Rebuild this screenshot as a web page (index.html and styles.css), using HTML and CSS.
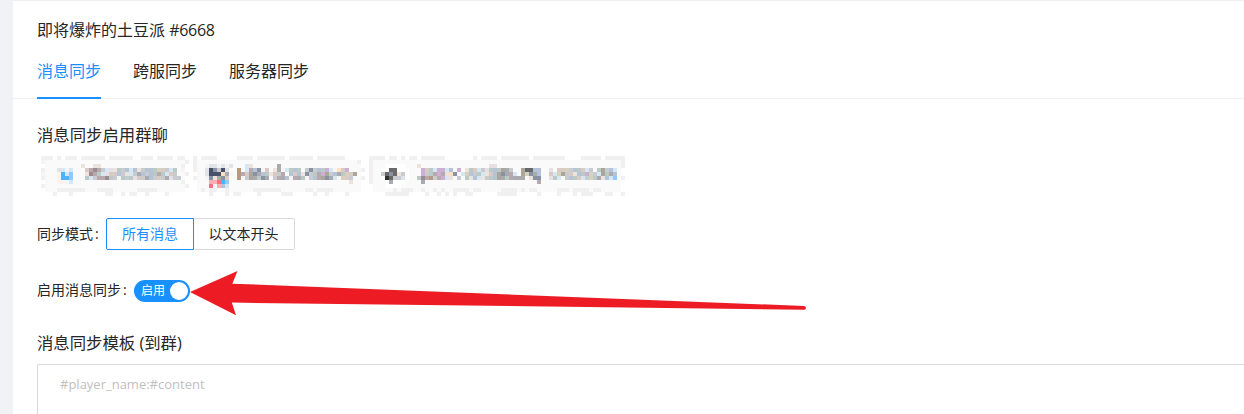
FILE: index.html
```html
<!DOCTYPE html>
<html lang="zh-CN">
<head>
<meta charset="utf-8">
<title>消息同步</title>
<link rel="stylesheet" href="styles.css">
</head>
<body>
<main class="panel">
  <header class="header">
    <div class="title">即将爆炸的土豆派 <span class="number">#6668</span></div>
    <nav class="tabs">
      <a class="tab active">消息同步</a>
      <a class="tab">跨服同步</a>
      <a class="tab">服务器同步</a>
    </nav>
  </header>
  <section class="content">
    <h3 class="heading">消息同步启用群聊</h3>
    <div class="groups">
      <svg class="group" data-tag="0" width="148" height="40" shape-rendering="crispEdges"></svg>
      <svg class="group" data-tag="1" width="172" height="40" shape-rendering="crispEdges"></svg>
      <svg class="group" data-tag="2" width="256" height="40" shape-rendering="crispEdges"></svg>
    </div>
    <div class="row mode">
      <span class="label">同步模式</span><span class="colon">:</span>
      <div class="radios">
        <span class="radio first">所有消息</span><span class="radio second">以文本开头</span>
      </div>
    </div>
    <div class="row enable">
      <span class="label">启用消息同步</span><span class="colon">:</span>
      <span class="switch"><span class="switch-text">启用</span><span class="knob"></span></span>
    </div>
    <h3 class="heading template">消息同步模板 (到群)</h3>
    <div class="textarea">#player_name:#content</div>
  </section>
</main>
<svg class="arrow" width="620" height="50" viewBox="188 268 620 50"><path fill="#ed1c24" d="M190 292L237.500 271L232.300 283.700L804 306Q806 306.500 806 308Q806 309.700 804 309.800L231.800 302.600L236 315.300Z"/></svg>
<script src="groups.js"></script>
</body>
</html>
```
FILE: styles.css
```css
* { box-sizing: border-box; }
body {
  margin: 0;
  height: 414px;
  overflow: hidden;
  padding-left: 13px;
  background: #f0f2f5;
  color: #262626;
  font-family: "Open Sans", "Noto Sans CJK SC", sans-serif;
  font-size: 14px;
}
.panel { height: 414px; background: #fff; border-top: 1px solid #f0f0f0; }
.header { height: 98px; padding: 15px 24px 0; border-bottom: 1px solid #f0f0f0; }
.title { height: 29px; line-height: 28px; font-size: 16px; white-space: nowrap; }
.number { letter-spacing: -0.3px; }
.tabs { display: flex; gap: 32px; height: 54px; }
.tab { height: 54px; line-height: 53px; font-size: 16px; white-space: nowrap; }
.tab.active { color: #1890ff; border-bottom: 2px solid #1890ff; }
.content { padding: 23px 0 0 24px; }
.heading { margin: 0; height: 26px; line-height: 26px; font-size: 16.38px; font-weight: 400; white-space: nowrap; }
.groups { display: flex; gap: 4px; height: 40px; margin: 8px 0 22px 4px; }
.group { display: block; flex: none; }
.row { display: flex; align-items: center; height: 32px; white-space: nowrap; }
.label, .colon { padding-bottom: 2px; }
.colon { width: 13px; padding-left: 2px; }
.radios { display: flex; height: 32px; }
.radio { line-height: 30px; text-align: center; border: 1px solid #d9d9d9; }
.radio.first { width: 88px; color: #1890ff; border-color: #1890ff; border-radius: 2px 0 0 2px; }
.radio.second { width: 101px; padding-right: 1px; border-left: 0; border-radius: 0 2px 2px 0; }
.enable { margin-top: 24px; }
.switch {
  display: flex;
  align-items: center;
  justify-content: space-between;
  width: 56px;
  height: 22px;
  margin-top: 2px;
  padding: 0 2px 0 7px;
  border-radius: 11px;
  background: #1890ff;
  color: #fff;
  font-size: 12px;
  line-height: 22px;
}
.knob { width: 18px; height: 18px; border-radius: 9px; background: #fff; }
.template { margin-top: 24px; }
.textarea {
  height: 60px;
  margin-top: 8px;
  padding: 8px 22px;
  border: 1px solid #d9d9d9;
  border-right: 0;
  border-radius: 2px 0 0 0;
  color: #bfbfbf;
  font-size: 13px;
  line-height: 22px;
}
.arrow { position: absolute; left: 188px; top: 268px; }
```
FILE: groups.js
```javascript
// Pixelated group tags: every character is one 4px cell.
const palette = {
  '0': '#f0f0f0', '1': '#fafafa', '2': '#f5f5f5', a: '#a9abb0', b: '#c8cbcf', c: '#b8a9ae',
  d: '#d9cbc4', e: '#b5c3d6', f: '#d5e7f4', g: '#bccac5', h: '#ece4dc', i: '#9c8c90',
  j: '#cbb0d3', k: '#8792a5', l: '#4eb3fc', m: '#91cafa', n: '#48506a', o: '#ff6d8a',
  p: '#fbaeb3', q: '#303030', r: '#686868', s: '#b79a80', t: '#ffe1c0', w: '#ffffff',
  u: '#e0e4e7', v: '#aaa79a', x: '#3dbbf2', y: '#d5d3be', z: '#e6dfe5'
};
const tags = [
  { cols: 37, runs: [
    [0, 0, '000.0.000.000000.000000..000.0000.00'], [0, 1, '2'], [36, 1, '0'], [35, 2, '0'],
    [0, 3, '0'], [0, 4, '2'], [35, 3, '2'], [36, 4, '0'], [0, 5, '0'], [35, 6, '0'], [36, 7, '0'], [0, 7, '0'],
    [10, 2, 'h'], [13, 2, 'hh'], [4, 3, 'ff2f'], [4, 4, '2lfm'], [4, 5, '2llm'], [4, 6, '222f'],
    [11, 3, 'dcicbfzhgbefehbeegydbfg'], [11, 4, 'hicgfzddebhfbaebegcgfdb'], [11, 5, 'gfbccigb2gbgzdbaebdbazbb'],
    [4, 8, '0000000'], [14, 8, '0000'], [24, 8, '00000'],
    [3, 9, '0...0........00..0.00..0....0']
  ]},
  { cols: 43, runs: [
    [0, 0, '0.0000.....0000.0000000.000000.0000000'], [0, 1, '0'], [0, 2, '0'], [0, 3, '0'], [0, 5, '0'], [42, 3, '0'], [42, 5, '0'], [41, 1, '0'],
    [3, 2, '2uu2u2u'], [13, 2, 'fh'], [21, 2, 'a'], [3, 3, 'unkbnu'], [3, 4, 'unnnta2'], [3, 5, '2khakd'], [4, 6, 'ppoxm'], [4, 7, 'o2pef'],
    [11, 3, 's1fcek2d1ha2fgeg1bkbegjf2tdj'], [11, 4, 'scdvkaeghdbc1edehkbgcjvbeagydv'], [11, 5, 's2bvagka1bcae2cag2becvkaf2ydb'],
    [39, 6, 'h'], [2, 8, '0.00..0'], [15, 8, '0000000'], [28, 8, '00.0000'],
    [4, 9, '0...0.00....0.....000.....0..0....0']
  ]},
  { cols: 64, runs: [
    [0, 0, '0000.00.0.00.000000.......0.0000.0000000.00000000....00000.00000'], [0, 1, '0'], [0, 2, '0'], [0, 3, '0'], [0, 4, '0'], [0, 5, '0'], [0, 6, '0'], [63, 1, '0'], [63, 2, '0'], [63, 5, '0'],
    [4, 2, 'wwwww'], [3, 3, 'wwrrwww'], [3, 4, 'brkrhbw'], [3, 5, 'wqrbbuw'], [4, 6, 'wawww'], [4, 7, 'wwww'],
    [12, 2, 'h'], [30, 2, 'zz'],
    [13, 3, 'jdgfjjfe1j1hgdfbzgegvab11vrree'], [13, 4, 'jbgcjchtk1fyebgfhdevkacf1vykae'],
    [12, 5, 'gicsbcjfh1b1ghefhbgevagcaaa1hkk'], [13, 6, 'a'], [42, 6, 'c'],
    [45, 3, 'z1ddybegdfb1gvbef'], [45, 4, 'dfyvbdhegjybfvgae'], [45, 5, 'zgf1begdfbygahefm'],
    [6, 8, '0.000..0..0.0..0000.00'], [33, 8, '0000.0.00'], [47, 8, '000.0000.00'],
    [4, 9, '000000....0..0.0.0..00......00000.....0....0...0.000...00..0']
  ]}
];
document.querySelectorAll('.group').forEach(svg => {
  const tag = tags[svg.dataset.tag];
  const add = (x, y, w, h, color) => {
    const r = document.createElementNS('http://www.w3.org/2000/svg', 'rect');
    Object.entries({ x: x * 4, y: y * 4, width: w * 4, height: h * 4, fill: color }).forEach(([k, v]) => r.setAttribute(k, v));
    svg.appendChild(r);
  };
  add(1, 1, tag.cols - 2, 8, palette['1']);
  tag.runs.forEach(([x, y, cells]) => [...cells].forEach((c, i) => {
    if (palette[c]) add(x + i, y, 1, 1, palette[c]);
  }));
});
```
